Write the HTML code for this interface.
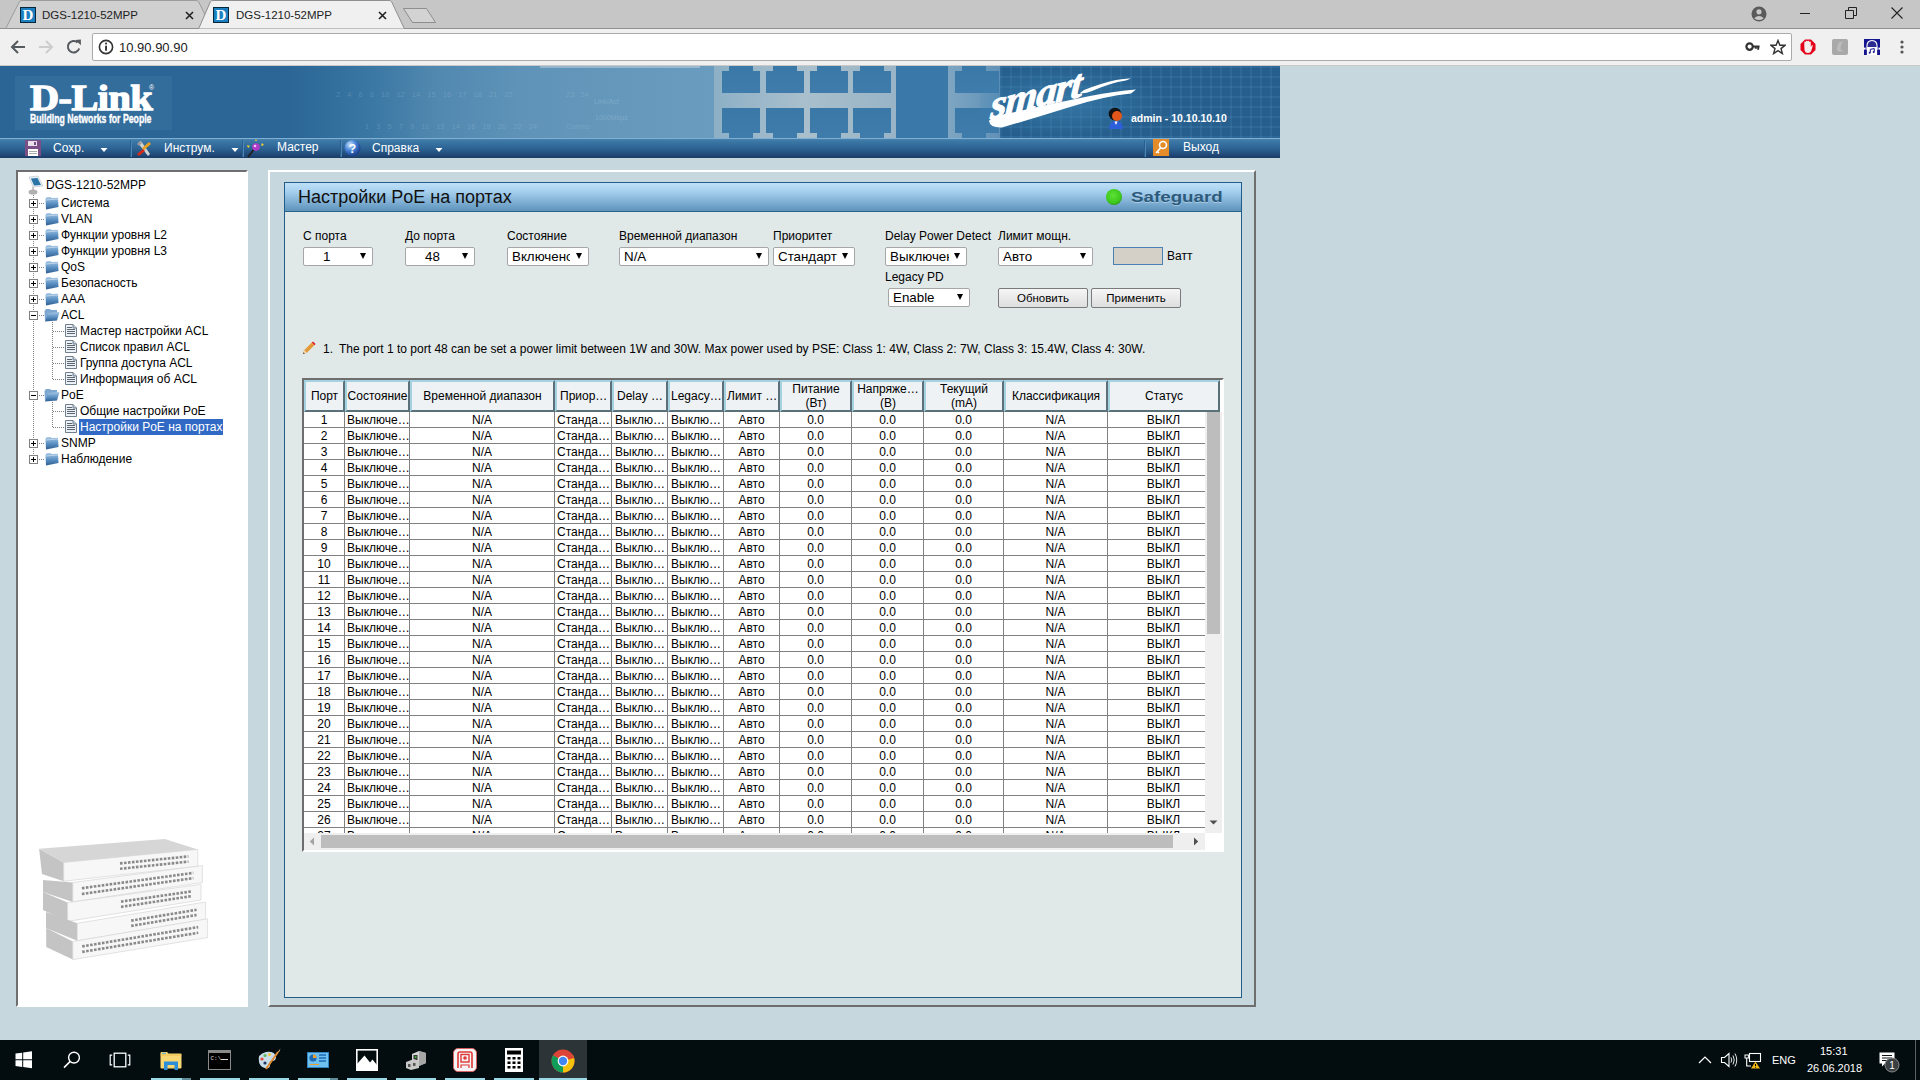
<!DOCTYPE html>
<html><head><meta charset="utf-8">
<style>
*{margin:0;padding:0;box-sizing:border-box}
html,body{width:1920px;height:1080px;overflow:hidden;background:#c6d7de;font-family:"Liberation Sans",sans-serif;font-size:12px;color:#000}
.a{position:absolute}
#tabstrip{left:0;top:0;width:1920px;height:28px;background:#c6c6c6}
#toolbar{left:0;top:29px;width:1920px;height:37px;background:#f0f0f0;border-bottom:1px solid #c9c9c9}
#omni{left:92px;top:33px;width:1700px;height:28px;background:#fff;border:1px solid #ababab;border-radius:2px}
.fav{width:16px;height:16px;background:#1b7fc0;border:1px solid #06263c}
.fav span{position:absolute;left:0;top:-1px;width:14px;text-align:center;font-family:"Liberation Serif",serif;font-weight:bold;font-size:15px;line-height:16px;color:#fff}
.tabt{font-size:11.5px;line-height:14px;color:#222;white-space:nowrap}
#taskbar{left:0;top:1040px;width:1920px;height:40px;background:#030d10}
#hdr{left:0;top:66px;width:1280px;height:72px;overflow:hidden;background:linear-gradient(90deg,#2a6595 0px,#2b6696 290px,#3a77a3 370px,#5289b0 440px,#5f93b8 520px,#6598bb 620px,#6a9cbf 714px)}
#menubar{left:0;top:138px;width:1280px;height:20px;background:linear-gradient(#4f88b2 0%,#3c78a6 15%,#2d6596 50%,#1b3c68 100%)}
#tree{left:16px;top:170px;width:232px;height:837px;background:#fff;border:2px solid;border-color:#6e6e6e #fff #fff #6e6e6e}
#frame{left:268px;top:170px;width:988px;height:837px;border:2px solid;border-color:#fff #6e6e6e #6e6e6e #fff}
#panel{left:284px;top:182px;width:958px;height:816px;background:#e0e8e8;border:1px solid #215d8a}
#title{left:285px;top:183px;width:956px;height:29px;background:linear-gradient(#bfe0f8 0%,#a6d0ee 30%,#78a9cf 75%,#5e93ba 100%);border-bottom:1px solid #2a628e}
.pt{width:38px;background:linear-gradient(#3a78a8,#3f7cab);}
.pt.t{clip-path:polygon(0 5px,7px 5px,7px 0,31px 0,31px 5px,100% 5px,100% 100%,0 100%)}
.pt.b{clip-path:polygon(0 0,100% 0,100% calc(100% - 5px),31px calc(100% - 5px),31px 100%,7px 100%,7px calc(100% - 5px),0 calc(100% - 5px))}
.mt{top:141px;font-size:12px;line-height:14px;color:#fff;white-space:nowrap}
.msep{top:140px;width:1px;height:17px;background:#2a5c8c;box-shadow:1px 0 0 #4a86b8}
.tt{font-size:12px;line-height:14px;white-space:nowrap;color:#000}
.bx{width:9px;height:9px;border:1px solid #808080;background:#fff}
.dv{width:1px;background:repeating-linear-gradient(#808080 0 1px,transparent 1px 2px)}
.dh{height:1px;background:repeating-linear-gradient(90deg,#808080 0 1px,transparent 1px 2px)}
.lb{font-size:12px;line-height:14px;white-space:nowrap;color:#000}
.sel{height:19px;background:#fff;border:1px solid #a6a6a6;border-radius:2px}
.sel span{position:absolute;top:2px;font-size:13.33px;line-height:14px;white-space:nowrap}
.sel i{position:absolute;right:6px;top:5px;width:0;height:0;border-left:3.5px solid transparent;border-right:3.5px solid transparent;border-top:6px solid #000}
.btn{height:20px;border:1px solid #7a7a7a;border-radius:2px;background:linear-gradient(#f6f6f6,#dedede);font-size:11.5px;line-height:19px;text-align:center;color:#000}
.hc{top:380px;height:32px;background:#eef2f4;border:2px solid;border-color:#a4d2e0 #5b717a #5b717a #a4d2e0}
.ht{position:absolute;font-size:12px;line-height:14px;white-space:nowrap;color:#000}
.hl{left:0;width:901px;height:1px;background:#808080}
.vl{top:0;width:1px;height:421px;background:#808080}
.dt{font-size:12px;line-height:15px;white-space:nowrap;color:#000}
.tbi{top:1078px;height:2px;background:#9bd8e6}
</style></head><body>
<!-- ===== Chrome tab strip ===== -->
<div id="tabstrip" class="a"></div>
<svg class="a" style="left:0;top:0" width="450" height="30">
  <!-- inactive tab -->
  <path d="M5.5 29 L19.5 1.5 Q20.5 0.5 22 0.5 L196 0.5 Q197.5 0.5 198.5 1.5 L212 29 Z" fill="#d0d0d0" stroke="#9c9c9c" stroke-width="1"/>
  <!-- active tab -->
  <path d="M198.5 29 L210.5 1.5 Q211.5 0.5 213 0.5 L389 0.5 Q390.5 0.5 391.5 1.5 L404.5 29 Z" fill="#f0f0f0" stroke="#8f8f8f" stroke-width="1"/>
  <!-- new tab button -->
  <path d="M403.5 8.5 L426.5 8.5 L435.5 22.5 L412.5 22.5 Z" fill="#d3d3d3" stroke="#8e8e8e" stroke-width="1" stroke-linejoin="round"/>
</svg>
<div class="a" style="left:0;top:28px;width:199px;height:1px;background:#909090"></div>
<div class="a" style="left:404px;top:28px;width:1516px;height:1px;background:#909090"></div>
<!-- favicons -->
<div class="a fav" style="left:20px;top:7px"><span>D</span></div>
<div class="a fav" style="left:213px;top:7px"><span>D</span></div>
<div class="a tabt" style="left:42px;top:8px">DGS-1210-52MPP</div>
<div class="a tabt" style="left:236px;top:8px">DGS-1210-52MPP</div>
<svg class="a" style="left:185px;top:11px" width="9" height="9"><path d="M1 1L8 8M8 1L1 8" stroke="#222" stroke-width="1.6"/></svg>
<svg class="a" style="left:378px;top:11px" width="9" height="9"><path d="M1 1L8 8M8 1L1 8" stroke="#222" stroke-width="1.6"/></svg>
<!-- window controls -->
<svg class="a" style="left:1750px;top:5px" width="18" height="18"><circle cx="9" cy="9" r="7.5" fill="#5a5a5a"/><circle cx="9" cy="6.8" r="2.6" fill="#c8c8c8"/><path d="M4.2 13.2 Q9 8.8 13.8 13.2 Q9 17 4.2 13.2Z" fill="#c8c8c8"/></svg>
<div class="a" style="left:1800px;top:13px;width:10px;height:1px;background:#222"></div>
<svg class="a" style="left:1845px;top:7px" width="12" height="12"><path d="M0.5 3.5H8.5V11.5H0.5Z M3.5 3.5V0.5H11.5V8.5H8.5" fill="none" stroke="#222" stroke-width="1"/></svg>
<svg class="a" style="left:1891px;top:7px" width="12" height="12"><path d="M0.5 0.5L11.5 11.5M11.5 0.5L0.5 11.5" stroke="#222" stroke-width="1.1"/></svg>
<!-- ===== toolbar ===== -->
<div id="toolbar" class="a"></div>
<svg class="a" style="left:10px;top:39px" width="16" height="16"><path d="M15 8H2.5M8 2L2 8L8 14" fill="none" stroke="#555a5f" stroke-width="2"/></svg>
<svg class="a" style="left:38px;top:39px" width="16" height="16"><path d="M1 8H13.5M8 2L14 8L8 14" fill="none" stroke="#cdcdcd" stroke-width="2"/></svg>
<svg class="a" style="left:66px;top:39px" width="16" height="16"><path d="M13.2 9.5 A5.8 5.8 0 1 1 11.6 3.4" fill="none" stroke="#555a5f" stroke-width="2"/><path d="M9.2 0.9 L14.9 0.5 L14.9 6.2Z" fill="#555a5f"/></svg>
<div id="omni" class="a"></div>
<svg class="a" style="left:98px;top:39px" width="16" height="16"><circle cx="8" cy="8" r="6.6" fill="none" stroke="#333" stroke-width="1.6"/><rect x="7.1" y="6.7" width="1.9" height="5" fill="#333"/><rect x="7.1" y="3.6" width="1.9" height="1.8" fill="#333"/></svg>
<div class="a" style="left:119px;top:40px;font-size:13px;color:#222;line-height:15px">10.90.90.90</div>
<svg class="a" style="left:1745px;top:39px" width="16" height="16"><circle cx="4.6" cy="7.6" r="3.2" fill="none" stroke="#333" stroke-width="2.2"/><path d="M7.6 7.6H14.6M13.2 7.6V10.8M10.8 7.6V9.8" stroke="#333" stroke-width="2"/></svg>
<svg class="a" style="left:1770px;top:39px" width="16" height="16"><path d="M8 1.4L9.9 6.2L15 6.3L11 9.6L12.4 14.6L8 11.7L3.6 14.6L5 9.6L1 6.3L6.1 6.2Z" fill="none" stroke="#333" stroke-width="1.4" stroke-linejoin="miter"/></svg>
<svg class="a" style="left:1800px;top:39px" width="16" height="16"><path d="M5 0.5H11L15.5 5V11L11 15.5H5L0.5 11V5Z" fill="#e4001b"/><path d="M4.3 7 V3.4 Q4.3 2.5 5.1 2.5 Q5.8 2.5 5.8 3.4 V2.8 Q5.8 1.8 6.7 1.8 Q7.5 1.8 7.5 2.8 V2.6 Q7.5 1.8 8.4 1.8 Q9.2 1.8 9.2 2.7 V3.2 Q9.3 2.4 10 2.4 Q10.8 2.5 10.8 3.3 V8.2 L11.6 6.6 Q12.3 5.8 12.9 6.4 L11.2 12 Q10.5 14 8 14 Q5.2 14 4.6 11.5 Z" fill="#f4eeee"/></svg>
<svg class="a" style="left:1832px;top:39px" width="16" height="16"><rect x="0" y="0" width="16" height="16" rx="2" fill="#a9a9a9"/><path d="M7 3.5 Q9 2.4 11.6 2.6 Q9.6 4 9 6 Q8.4 8.5 8.8 11 L11 11.4 Q10 13 7 12.5 Q4.6 12 5.2 9 Q5.7 5.5 7 3.5Z" fill="#bdbdbd"/></svg>
<svg class="a" style="left:1864px;top:39px" width="16" height="16"><rect x="0" y="0" width="16" height="16" fill="#14148e"/><path d="M2.4 16 V7 Q2.4 1 8 1 Q13.6 1 13.6 7 V16Z" fill="#fff"/><path d="M3.4 8 Q3.4 2 8 2 Q12.6 2 12.6 8Z" fill="#2a2a90"/><rect x="0" y="8.6" width="1.6" height="2" fill="#fff"/><rect x="14.4" y="8.6" width="1.6" height="2" fill="#fff"/><rect x="1.6" y="11" width="1.2" height="5" fill="#14148e"/><rect x="13.2" y="11" width="1.2" height="5" fill="#14148e"/><path d="M6.3 13.5 V10.3 L10.3 9.6 V12.7" fill="none" stroke="#14148e" stroke-width="1"/><circle cx="5.7" cy="13.8" r="1" fill="#14148e"/><circle cx="9.7" cy="13" r="1" fill="#14148e"/></svg>
<svg class="a" style="left:1899px;top:39px" width="6" height="16"><circle cx="3" cy="3" r="1.6" fill="#555"/><circle cx="3" cy="8" r="1.6" fill="#555"/><circle cx="3" cy="13" r="1.6" fill="#555"/></svg>
<!-- ===== D-Link header ===== -->
<div id="hdr" class="a">
  <div class="a" style="left:15px;top:10px;width:157px;height:54px;background:#336d9c"></div>
  <div class="a" style="left:30px;top:13px;font-family:'Liberation Serif',serif;font-weight:bold;font-size:36px;line-height:40px;color:#fff;letter-spacing:-0.5px;transform:scale(1.12,0.97);transform-origin:0 0;-webkit-text-stroke:1.3px #fff">D-Link</div>
  <div class="a" style="left:149px;top:18px;font-size:7px;color:#fff;line-height:8px">&#174;</div>
  <div class="a" style="left:30px;top:46px;font-weight:bold;font-size:13px;line-height:14px;color:#fff;transform:scaleX(0.67);transform-origin:0 0;white-space:nowrap;-webkit-text-stroke:0.4px #fff">Building Networks for People</div>
  <!-- faint port labels -->
  <div class="a" style="left:336px;top:24px;font-size:7.5px;color:rgba(205,225,240,0.2);white-space:nowrap;word-spacing:5px">2 4 6 8 10 12 14 15 16 17 18 21 22</div>
  <div class="a" style="left:566px;top:24px;font-size:7.5px;color:rgba(205,225,240,0.2);white-space:nowrap;word-spacing:4px">23 24</div>
  <div class="a" style="left:365px;top:56px;font-size:7.5px;color:rgba(205,225,240,0.2);white-space:nowrap;word-spacing:5px">1 3 5 7 9 11 13 14 16 19 20 22 24</div>
  <div class="a" style="left:566px;top:56px;font-size:7.5px;color:rgba(205,225,240,0.2);white-space:nowrap">Combo</div>
  <div class="a" style="left:594px;top:32px;font-size:7px;color:rgba(205,225,240,0.25)">Link/Act</div>
  <div class="a" style="left:595px;top:48px;font-size:7px;color:rgba(205,225,240,0.25)">1000Mbps</div>
  <div class="a" style="left:540px;top:0;width:160px;height:2px;background:rgba(200,215,225,0.5)"></div>
  <!-- port block 1 -->
  <div class="a" style="left:714px;top:0;width:182px;height:72px;background:linear-gradient(90deg,#8db0c6,#a9bfcc 50%,#98b4c6)"></div>
  <div class="a pt t" style="left:722px;top:0;height:27px"></div>
  <div class="a pt t" style="left:766px;top:0;height:27px"></div>
  <div class="a pt t" style="left:810px;top:0;height:27px"></div>
  <div class="a pt t" style="left:853px;top:0;height:27px"></div>
  <div class="a pt b" style="left:722px;top:42px;height:30px"></div>
  <div class="a pt b" style="left:766px;top:42px;height:30px"></div>
  <div class="a pt b" style="left:810px;top:42px;height:30px"></div>
  <div class="a pt b" style="left:853px;top:42px;height:30px"></div>
  <div class="a" style="left:896px;top:0;width:52px;height:72px;background:#3978a8"></div>
  <!-- port block 2 -->
  <div class="a" style="left:948px;top:0;width:60px;height:72px;background:linear-gradient(90deg,#7ea6c2,#5b8db5)"></div>
  <div class="a pt t" style="left:955px;top:0;height:27px;width:44px"></div>
  <div class="a pt b" style="left:955px;top:42px;height:30px;width:44px"></div>
  <!-- grid region -->
  <div class="a" style="left:1000px;top:0;width:280px;height:72px;background-color:#265f8e;background-image:repeating-linear-gradient(90deg,rgba(100,160,205,0.14) 0 2px,transparent 2px 10px),repeating-linear-gradient(0deg,rgba(100,160,205,0.14) 0 2px,transparent 2px 10px)"></div>
  <div class="a" style="left:980px;top:0;width:180px;height:72px;background:radial-gradient(ellipse at 45% 50%,rgba(60,130,175,0.7),rgba(60,130,175,0) 70%)"></div>
  <!-- smart logo -->
  <svg class="a" style="left:980px;top:0" width="170" height="72">
    <path d="M9 55 Q12 50 30 47 Q70 38 110 30 Q135 25 156 23.5 L151 27.5 Q125 30 90 41 Q55 52 22 61.5 Q10 62 9 55Z" fill="#fff"/>
    <path d="M104 24 Q122 17 136 14 Q146 12 151 12.5 L146 14.5 Q130 17 112 25 Q104 28 100 27Z" fill="#fff"/>
    <g transform="translate(10 53) rotate(-14) skewX(-18) scale(1.25 1.12)"><text x="0" y="0" font-family="Liberation Serif" font-style="italic" font-weight="bold" font-size="34" fill="#fff" stroke="#fff" stroke-width="0.8" letter-spacing="-1">smart</text></g>
  </svg>
  <!-- user icon -->
  <svg class="a" style="left:1107px;top:41px" width="18" height="23">
    <path d="M2 22 Q2 15 8 14 L10 14 Q16 15 16 22Z" fill="#2d5fd8"/>
    <path d="M7.5 14.5 L9 18 L10.5 14.5Z" fill="#fff"/>
    <circle cx="8" cy="7" r="6.3" fill="#111"/>
    <circle cx="10" cy="9" r="5" fill="#e0561b"/>
  </svg>
  <div class="a" style="left:1131px;top:46px;font-weight:bold;font-size:10.5px;line-height:13px;color:#fff;white-space:nowrap">admin - 10.10.10.10</div>
</div>
<!-- ===== menu bar ===== -->
<div id="menubar" class="a"></div>
<div class="a" style="left:0;top:138px;width:1280px;height:1px;background:#7fb0d4"></div>
<!-- save icon -->
<svg class="a" style="left:25px;top:140px" width="16" height="16"><rect x="0" y="0" width="16" height="16" fill="#7a4f86"/><rect x="3" y="1" width="9" height="5" fill="#e8e0ea"/><rect x="9" y="2" width="2" height="3" fill="#7a4f86"/><rect x="3" y="9" width="10" height="7" fill="#fff"/><rect x="4" y="11" width="8" height="1" fill="#aaa"/><rect x="4" y="13" width="8" height="1" fill="#aaa"/></svg>
<div class="a mt" style="left:53px">Сохр.</div>
<svg class="a" style="left:100px;top:148px" width="8" height="5"><path d="M0.5 0H7.5L4 4Z" fill="#fff"/></svg>
<div class="a msep" style="left:130px"></div>
<!-- tools icon -->
<svg class="a" style="left:136px;top:140px" width="16" height="17"><path d="M2 3 L5 1 L14 14 L12 16Z" fill="#d2d2d2"/><path d="M1 4 L4 1 L6 3 L3 6Z" fill="#9a9a9a"/><path d="M13 2 L15 4 L8 10 L6 8Z" fill="#e8a020"/><path d="M7 9 L9 11 L3 16 L1 14Z" fill="#d42a1a"/></svg>
<div class="a mt" style="left:164px">Инструм.</div>
<svg class="a" style="left:231px;top:148px" width="8" height="5"><path d="M0.5 0H7.5L4 4Z" fill="#fff"/></svg>
<div class="a msep" style="left:242px"></div>
<!-- wand icon -->
<svg class="a" style="left:246px;top:139px" width="19" height="19"><path d="M2 18 L9 9" stroke="#222" stroke-width="2"/><circle cx="10" cy="8" r="3.8" fill="#b03ac8"/><circle cx="9" cy="7" r="1.3" fill="#f0c0ff"/><path d="M1 6 L4 7 L2 9Z M16 4 L18 6 L15 7Z M10 0 L11 2 L9 2Z" fill="#f6d62a"/></svg>
<div class="a mt" style="left:277px;top:140px">Мастер</div>
<div class="a msep" style="left:340px"></div>
<!-- help icon -->
<svg class="a" style="left:344px;top:139px" width="17" height="18"><defs><radialGradient id="hg" cx="35%" cy="30%" r="70%"><stop offset="0" stop-color="#cfe6ff"/><stop offset="0.5" stop-color="#4a86d8"/><stop offset="1" stop-color="#1a3f90"/></radialGradient></defs><circle cx="8.5" cy="9" r="8" fill="url(#hg)"/><text x="8.5" y="13.5" text-anchor="middle" font-family="Liberation Sans" font-weight="bold" font-size="12" fill="#fff">?</text></svg>
<div class="a mt" style="left:372px">Справка</div>
<svg class="a" style="left:435px;top:148px" width="8" height="5"><path d="M0.5 0H7.5L4 4Z" fill="#fff"/></svg>
<div class="a msep" style="left:1144px"></div>
<!-- exit icon -->
<svg class="a" style="left:1153px;top:139px" width="16" height="17"><rect x="0" y="0" width="16" height="17" fill="#e48c2a"/><circle cx="10" cy="6" r="3.5" fill="none" stroke="#fff" stroke-width="1.6"/><path d="M8 8.5 L3 14 M4.5 12.5 L6 14" stroke="#fff" stroke-width="1.6"/></svg>
<div class="a mt" style="left:1183px;top:140px">Выход</div>
<!-- ===== tree panel ===== -->
<div id="tree" class="a"></div>
<!-- root icon -->
<svg class="a" style="left:28px;top:175px" width="16" height="20">
  <path d="M1 2 L10 1 L15 11 L5 12Z" fill="#e8eef2" stroke="#b8c4cc" stroke-width="0.6"/>
  <path d="M3 3.5 L9.5 3 L13 10 L6 10.5Z" fill="#2a74a8"/>
  <path d="M5 12 L5 15" stroke="#aaa" stroke-width="1.2"/>
  <ellipse cx="5" cy="17" rx="4.5" ry="2.6" fill="#b0b0b0"/>
</svg>
<div class="a tt" style="left:46px;top:178px">DGS-1210-52MPP</div>
<!-- vertical dotted lines -->
<div class="a dv" style="left:33px;top:195px;height:264px"></div>
<div class="a dv" style="left:52px;top:322px;height:57px"></div>
<div class="a dv" style="left:52px;top:402px;height:25px"></div>
<svg width="0" height="0" style="position:absolute"><defs>
<linearGradient id="fg" x1="0" y1="0" x2="0" y2="1"><stop offset="0" stop-color="#a8c8e4"/><stop offset="0.5" stop-color="#5d93c4"/><stop offset="1" stop-color="#2f5f94"/></linearGradient>
<symbol id="fold" viewBox="0 0 14 14"><path d="M0.5 3 L1.5 1.2 L5.5 1 L6.5 2 L13 1.8 L13.5 11 L1 13.5 Z" fill="url(#fg)"/><path d="M1 4 L13 3" stroke="#c8dcf0" stroke-width="0.8"/></symbol>
<symbol id="folo" viewBox="0 0 16 14"><path d="M1 13 L0.5 3 L2 1 L6 1 L7 2 L13 2 L13 5" fill="#7fa8d0"/><path d="M1 13.5 L4 5 L15.5 4 L13 12.5Z" fill="url(#fg)"/></symbol>
<symbol id="page" viewBox="0 0 12 13"><path d="M0.5 0.5 H8 L11.5 4 V12.5 H0.5Z" fill="#eef2f6" stroke="#6f7f8e" stroke-width="1"/><path d="M8 0.5 V4 H11.5" fill="#c8d0d8" stroke="#6f7f8e" stroke-width="1"/><rect x="2" y="3" width="5" height="1" fill="#5a6470"/><rect x="2" y="5" width="8" height="1" fill="#5a6470"/><rect x="2" y="7" width="8" height="1" fill="#5a6470"/><rect x="2" y="9" width="8" height="1" fill="#5a6470"/></symbol>
</defs></svg>
<div class="a bx" style="left:29px;top:199px"><div class="a" style="left:1px;top:3px;width:5px;height:1px;background:#000"></div><div class="a" style="left:3px;top:1px;width:1px;height:5px;background:#000"></div></div>
<div class="a dh" style="left:39px;top:203px;width:5px"></div>
<svg class="a" style="left:45px;top:196px" width="14" height="14"><use href="#fold"/></svg>
<div class="a tt" style="left:61px;top:196px">Система</div>
<div class="a bx" style="left:29px;top:215px"><div class="a" style="left:1px;top:3px;width:5px;height:1px;background:#000"></div><div class="a" style="left:3px;top:1px;width:1px;height:5px;background:#000"></div></div>
<div class="a dh" style="left:39px;top:219px;width:5px"></div>
<svg class="a" style="left:45px;top:212px" width="14" height="14"><use href="#fold"/></svg>
<div class="a tt" style="left:61px;top:212px">VLAN</div>
<div class="a bx" style="left:29px;top:231px"><div class="a" style="left:1px;top:3px;width:5px;height:1px;background:#000"></div><div class="a" style="left:3px;top:1px;width:1px;height:5px;background:#000"></div></div>
<div class="a dh" style="left:39px;top:235px;width:5px"></div>
<svg class="a" style="left:45px;top:228px" width="14" height="14"><use href="#fold"/></svg>
<div class="a tt" style="left:61px;top:228px">Функции уровня L2</div>
<div class="a bx" style="left:29px;top:247px"><div class="a" style="left:1px;top:3px;width:5px;height:1px;background:#000"></div><div class="a" style="left:3px;top:1px;width:1px;height:5px;background:#000"></div></div>
<div class="a dh" style="left:39px;top:251px;width:5px"></div>
<svg class="a" style="left:45px;top:244px" width="14" height="14"><use href="#fold"/></svg>
<div class="a tt" style="left:61px;top:244px">Функции уровня L3</div>
<div class="a bx" style="left:29px;top:263px"><div class="a" style="left:1px;top:3px;width:5px;height:1px;background:#000"></div><div class="a" style="left:3px;top:1px;width:1px;height:5px;background:#000"></div></div>
<div class="a dh" style="left:39px;top:267px;width:5px"></div>
<svg class="a" style="left:45px;top:260px" width="14" height="14"><use href="#fold"/></svg>
<div class="a tt" style="left:61px;top:260px">QoS</div>
<div class="a bx" style="left:29px;top:279px"><div class="a" style="left:1px;top:3px;width:5px;height:1px;background:#000"></div><div class="a" style="left:3px;top:1px;width:1px;height:5px;background:#000"></div></div>
<div class="a dh" style="left:39px;top:283px;width:5px"></div>
<svg class="a" style="left:45px;top:276px" width="14" height="14"><use href="#fold"/></svg>
<div class="a tt" style="left:61px;top:276px">Безопасность</div>
<div class="a bx" style="left:29px;top:295px"><div class="a" style="left:1px;top:3px;width:5px;height:1px;background:#000"></div><div class="a" style="left:3px;top:1px;width:1px;height:5px;background:#000"></div></div>
<div class="a dh" style="left:39px;top:299px;width:5px"></div>
<svg class="a" style="left:45px;top:292px" width="14" height="14"><use href="#fold"/></svg>
<div class="a tt" style="left:61px;top:292px">AAA</div>
<div class="a bx" style="left:29px;top:311px"><div class="a" style="left:1px;top:3px;width:5px;height:1px;background:#000"></div></div>
<div class="a dh" style="left:39px;top:315px;width:5px"></div>
<svg class="a" style="left:44px;top:308px" width="16" height="14"><use href="#folo"/></svg>
<div class="a tt" style="left:61px;top:308px">ACL</div>
<div class="a dh" style="left:53px;top:331px;width:11px"></div>
<svg class="a" style="left:65px;top:324px" width="12" height="13"><use href="#page"/></svg>
<div class="a tt" style="left:80px;top:324px">Мастер настройки ACL</div>
<div class="a dh" style="left:53px;top:347px;width:11px"></div>
<svg class="a" style="left:65px;top:340px" width="12" height="13"><use href="#page"/></svg>
<div class="a tt" style="left:80px;top:340px">Список правил ACL</div>
<div class="a dh" style="left:53px;top:363px;width:11px"></div>
<svg class="a" style="left:65px;top:356px" width="12" height="13"><use href="#page"/></svg>
<div class="a tt" style="left:80px;top:356px">Группа доступа ACL</div>
<div class="a dh" style="left:53px;top:379px;width:11px"></div>
<svg class="a" style="left:65px;top:372px" width="12" height="13"><use href="#page"/></svg>
<div class="a tt" style="left:80px;top:372px">Информация об ACL</div>
<div class="a bx" style="left:29px;top:391px"><div class="a" style="left:1px;top:3px;width:5px;height:1px;background:#000"></div></div>
<div class="a dh" style="left:39px;top:395px;width:5px"></div>
<svg class="a" style="left:44px;top:388px" width="16" height="14"><use href="#folo"/></svg>
<div class="a tt" style="left:61px;top:388px">PoE</div>
<div class="a dh" style="left:53px;top:411px;width:11px"></div>
<svg class="a" style="left:65px;top:404px" width="12" height="13"><use href="#page"/></svg>
<div class="a tt" style="left:80px;top:404px">Общие настройки PoE</div>
<div class="a dh" style="left:53px;top:427px;width:11px"></div>
<svg class="a" style="left:65px;top:420px" width="12" height="13"><use href="#page"/></svg>
<div class="a" style="left:79px;top:419px;width:144px;height:16px;background:#316ac5"></div>
<div class="a tt" style="left:80px;top:420px;color:#fff">Настройки PoE на портах</div>
<div class="a bx" style="left:29px;top:439px"><div class="a" style="left:1px;top:3px;width:5px;height:1px;background:#000"></div><div class="a" style="left:3px;top:1px;width:1px;height:5px;background:#000"></div></div>
<div class="a dh" style="left:39px;top:443px;width:5px"></div>
<svg class="a" style="left:45px;top:436px" width="14" height="14"><use href="#fold"/></svg>
<div class="a tt" style="left:61px;top:436px">SNMP</div>
<div class="a bx" style="left:29px;top:455px"><div class="a" style="left:1px;top:3px;width:5px;height:1px;background:#000"></div><div class="a" style="left:3px;top:1px;width:1px;height:5px;background:#000"></div></div>
<div class="a dh" style="left:39px;top:459px;width:5px"></div>
<svg class="a" style="left:45px;top:452px" width="14" height="14"><use href="#fold"/></svg>
<div class="a tt" style="left:61px;top:452px">Наблюдение</div>
<!-- switch img -->
<svg class="a" style="left:30px;top:830px" width="190" height="140"><polygon points="9.1,18.8 33.7,32.4 33.7,51.2 12.0,44.0" fill="#c4c4c4"/><polygon points="33.7,32.4 167.8,19.4 167.8,36.3 33.7,51.2" fill="#f7f7f7" stroke="#d0d0d0" stroke-width="0.6"/><polygon points="9.1,18.8 134.8,9.1 167.8,19.4 33.7,32.4" fill="#d6d6d6"/><line x1="90.0" y1="33.4" x2="158.4" y2="26.4" stroke="#8a8a8a" stroke-width="2.6" stroke-dasharray="2.6 1.4"/><line x1="90.0" y1="38.8" x2="158.4" y2="31.6" stroke="#8a8a8a" stroke-width="2.6" stroke-dasharray="2.6 1.4"/><polygon points="13.0,50.0 42.8,52.5 42.8,71.9 13.0,62.0" fill="#c4c4c4"/><polygon points="42.8,52.5 172.4,35.6 172.4,52.5 42.8,71.9" fill="#f7f7f7" stroke="#d0d0d0" stroke-width="0.6"/><line x1="51.9" y1="58.2" x2="163.3" y2="42.9" stroke="#8a8a8a" stroke-width="2.6" stroke-dasharray="2.6 1.4"/><line x1="51.9" y1="64.0" x2="163.3" y2="48.1" stroke="#8a8a8a" stroke-width="2.6" stroke-dasharray="2.6 1.4"/><polygon points="13.0,62.0 37.6,72.6 37.6,91.4 13.0,80.0" fill="#c4c4c4"/><polygon points="37.6,72.6 171.0,54.4 171.0,70.0 37.6,91.4" fill="#f7f7f7" stroke="#d0d0d0" stroke-width="0.6"/><line x1="91.0" y1="71.6" x2="161.7" y2="61.4" stroke="#8a8a8a" stroke-width="2.6" stroke-dasharray="2.6 1.4"/><line x1="91.0" y1="76.9" x2="161.7" y2="66.1" stroke="#8a8a8a" stroke-width="2.6" stroke-dasharray="2.6 1.4"/><polygon points="16.0,82.0 47.3,93.3 47.3,110.8 16.0,98.0" fill="#c4c4c4"/><polygon points="47.3,93.3 175.6,72.0 175.6,89.4 47.3,110.8" fill="#f7f7f7" stroke="#d0d0d0" stroke-width="0.6"/><line x1="101.2" y1="90.6" x2="166.6" y2="79.8" stroke="#8a8a8a" stroke-width="2.6" stroke-dasharray="2.6 1.4"/><line x1="101.2" y1="95.9" x2="166.6" y2="85.0" stroke="#8a8a8a" stroke-width="2.6" stroke-dasharray="2.6 1.4"/><polygon points="16.2,98.0 42.8,111.5 42.8,129.6 16.2,117.0" fill="#c4c4c4"/><polygon points="42.8,111.5 177.6,88.8 177.6,107.6 42.8,129.6" fill="#f7f7f7" stroke="#d0d0d0" stroke-width="0.6"/><line x1="52.2" y1="116.4" x2="168.2" y2="97.1" stroke="#8a8a8a" stroke-width="2.6" stroke-dasharray="2.6 1.4"/><line x1="52.2" y1="121.9" x2="168.2" y2="102.8" stroke="#8a8a8a" stroke-width="2.6" stroke-dasharray="2.6 1.4"/></svg>
<!-- ===== content frame ===== -->
<div id="frame" class="a"></div>
<div id="panel" class="a"></div>
<div id="title" class="a"></div>
<div class="a" style="left:298px;top:187px;font-size:18px;line-height:20px;color:#111;white-space:nowrap">Настройки PoE на портах</div>
<svg class="a" style="left:1105px;top:188px" width="18" height="18"><defs><radialGradient id="gg" cx="45%" cy="40%" r="60%"><stop offset="0" stop-color="#5ee036"/><stop offset="0.8" stop-color="#3cc81c"/><stop offset="1" stop-color="#2f9a1a"/></radialGradient></defs><circle cx="9" cy="9" r="8" fill="url(#gg)"/></svg>
<div class="a" style="left:1131px;top:189px;font-size:14px;line-height:16px;font-weight:bold;color:#2b5a7c;white-space:nowrap;transform:scaleX(1.34);transform-origin:0 0;text-shadow:0 1px 0 rgba(255,255,255,0.35)">Safeguard</div>
<!-- labels -->
<div class="a lb" style="left:303px;top:229px">С порта</div>
<div class="a lb" style="left:405px;top:229px">До порта</div>
<div class="a lb" style="left:507px;top:229px">Состояние</div>
<div class="a lb" style="left:619px;top:229px">Временной диапазон</div>
<div class="a lb" style="left:773px;top:229px">Приоритет</div>
<div class="a lb" style="left:885px;top:229px">Delay Power Detect</div>
<div class="a lb" style="left:998px;top:229px">Лимит мощн.</div>
<div class="a lb" style="left:885px;top:270px">Legacy PD</div>
<!-- selects -->
<div class="a sel" style="left:303px;top:247px;width:70px"><span style="left:19px">1</span><i></i></div>
<div class="a sel" style="left:405px;top:247px;width:70px"><span style="left:19px">48</span><i></i></div>
<div class="a sel" style="left:507px;top:247px;width:82px"><span style="left:4px;width:58px;overflow:hidden">Включено</span><i></i></div>
<div class="a sel" style="left:619px;top:247px;width:150px"><span style="left:4px">N/A</span><i></i></div>
<div class="a sel" style="left:773px;top:247px;width:82px"><span style="left:4px">Стандарт</span><i></i></div>
<div class="a sel" style="left:885px;top:247px;width:82px"><span style="left:4px;width:59px;overflow:hidden">Выключено</span><i></i></div>
<div class="a sel" style="left:998px;top:247px;width:95px"><span style="left:4px">Авто</span><i></i></div>
<div class="a" style="left:1113px;top:247px;width:50px;height:18px;background:#d4d0c8;border:1px solid #4a80b4"></div>
<div class="a lb" style="left:1167px;top:249px">Ватт</div>
<div class="a sel" style="left:888px;top:288px;width:82px"><span style="left:4px">Enable</span><i></i></div>
<div class="a btn" style="left:998px;top:288px;width:90px">Обновить</div>
<div class="a btn" style="left:1091px;top:288px;width:90px">Применить</div>
<!-- note -->
<svg class="a" style="left:302px;top:341px" width="14" height="14"><path d="M1 13 L2.2 9.2 L9.8 1.6 L12.4 4.2 L4.8 11.8Z" fill="#e49a3a"/><path d="M9.8 1.6 L11 0.4 L13.6 3 L12.4 4.2Z" fill="#e0202a"/><path d="M1 13 L2.2 9.2 L4.8 11.8Z" fill="#f4d9b0"/><path d="M1 13 L1.6 11.2 L2.8 12.4Z" fill="#333"/></svg>
<div class="a lb" style="left:323px;top:342px">1.</div>
<div class="a lb" style="left:339px;top:342px">The port 1 to port 48 can be set a power limit between 1W and 30W. Max power used by PSE: Class 1: 4W, Class 2: 7W, Class 3: 15.4W, Class 4: 30W.</div>
<!-- ===== table ===== -->
<div class="a" style="left:302px;top:378px;width:922px;height:474px;background:#fff;border:2px solid;border-color:#6e6e6e #fff #fff #6e6e6e"></div>
<div class="a hc" style="left:304px;width:41px"><div class="ht" style="left:0;width:37px;text-align:center;top:7px">Порт</div></div>
<div class="a hc" style="left:345px;width:65px"><div class="ht" style="left:0;width:61px;text-align:center;top:7px">Состояние</div></div>
<div class="a hc" style="left:410px;width:145px"><div class="ht" style="left:0;width:141px;text-align:center;top:7px">Временной диапазон</div></div>
<div class="a hc" style="left:555px;width:57px"><div class="ht" style="left:3px;top:7px">Приор…</div></div>
<div class="a hc" style="left:612px;width:56px"><div class="ht" style="left:3px;top:7px">Delay …</div></div>
<div class="a hc" style="left:668px;width:56px"><div class="ht" style="left:1px;top:7px">Legacy…</div></div>
<div class="a hc" style="left:724px;width:56px"><div class="ht" style="left:1px;top:7px">Лимит …</div></div>
<div class="a hc" style="left:780px;width:72px"><div class="ht" style="left:0;width:68px;text-align:center;top:0px">Питание<br>(Вт)</div></div>
<div class="a hc" style="left:852px;width:72px"><div class="ht" style="left:0;width:68px;text-align:center;top:0px">Напряже…<br>(В)</div></div>
<div class="a hc" style="left:924px;width:80px"><div class="ht" style="left:0;width:76px;text-align:center;top:0px">Текущий<br>(mA)</div></div>
<div class="a hc" style="left:1004px;width:104px"><div class="ht" style="left:0;width:100px;text-align:center;top:7px">Классификация</div></div>
<div class="a hc" style="left:1108px;width:112px"><div class="ht" style="left:0;width:108px;text-align:center;top:7px">Статус</div></div>
<div class="a" style="left:304px;top:412px;width:901px;height:421px;overflow:hidden">
<div class="a hl" style="top:15px"></div>
<div class="a hl" style="top:31px"></div>
<div class="a hl" style="top:47px"></div>
<div class="a hl" style="top:63px"></div>
<div class="a hl" style="top:79px"></div>
<div class="a hl" style="top:95px"></div>
<div class="a hl" style="top:111px"></div>
<div class="a hl" style="top:127px"></div>
<div class="a hl" style="top:143px"></div>
<div class="a hl" style="top:159px"></div>
<div class="a hl" style="top:175px"></div>
<div class="a hl" style="top:191px"></div>
<div class="a hl" style="top:207px"></div>
<div class="a hl" style="top:223px"></div>
<div class="a hl" style="top:239px"></div>
<div class="a hl" style="top:255px"></div>
<div class="a hl" style="top:271px"></div>
<div class="a hl" style="top:287px"></div>
<div class="a hl" style="top:303px"></div>
<div class="a hl" style="top:319px"></div>
<div class="a hl" style="top:335px"></div>
<div class="a hl" style="top:351px"></div>
<div class="a hl" style="top:367px"></div>
<div class="a hl" style="top:383px"></div>
<div class="a hl" style="top:399px"></div>
<div class="a hl" style="top:415px"></div>
<div class="a hl" style="top:431px"></div>
<div class="a vl" style="left:40px"></div>
<div class="a vl" style="left:105px"></div>
<div class="a vl" style="left:250px"></div>
<div class="a vl" style="left:307px"></div>
<div class="a vl" style="left:363px"></div>
<div class="a vl" style="left:419px"></div>
<div class="a vl" style="left:475px"></div>
<div class="a vl" style="left:547px"></div>
<div class="a vl" style="left:619px"></div>
<div class="a vl" style="left:699px"></div>
<div class="a vl" style="left:803px"></div>
<div class="a dt" style="left:0px;top:1px;width:40px;text-align:center">1</div>
<div class="a dt" style="left:43px;top:1px">Выключе…</div>
<div class="a dt" style="left:106px;top:1px;width:144px;text-align:center">N/A</div>
<div class="a dt" style="left:253px;top:1px">Станда…</div>
<div class="a dt" style="left:311px;top:1px">Выклю…</div>
<div class="a dt" style="left:367px;top:1px">Выклю…</div>
<div class="a dt" style="left:420px;top:1px;width:55px;text-align:center">Авто</div>
<div class="a dt" style="left:476px;top:1px;width:71px;text-align:center">0.0</div>
<div class="a dt" style="left:548px;top:1px;width:71px;text-align:center">0.0</div>
<div class="a dt" style="left:620px;top:1px;width:79px;text-align:center">0.0</div>
<div class="a dt" style="left:700px;top:1px;width:103px;text-align:center">N/A</div>
<div class="a dt" style="left:804px;top:1px;width:111px;text-align:center">ВЫКЛ</div>
<div class="a dt" style="left:0px;top:17px;width:40px;text-align:center">2</div>
<div class="a dt" style="left:43px;top:17px">Выключе…</div>
<div class="a dt" style="left:106px;top:17px;width:144px;text-align:center">N/A</div>
<div class="a dt" style="left:253px;top:17px">Станда…</div>
<div class="a dt" style="left:311px;top:17px">Выклю…</div>
<div class="a dt" style="left:367px;top:17px">Выклю…</div>
<div class="a dt" style="left:420px;top:17px;width:55px;text-align:center">Авто</div>
<div class="a dt" style="left:476px;top:17px;width:71px;text-align:center">0.0</div>
<div class="a dt" style="left:548px;top:17px;width:71px;text-align:center">0.0</div>
<div class="a dt" style="left:620px;top:17px;width:79px;text-align:center">0.0</div>
<div class="a dt" style="left:700px;top:17px;width:103px;text-align:center">N/A</div>
<div class="a dt" style="left:804px;top:17px;width:111px;text-align:center">ВЫКЛ</div>
<div class="a dt" style="left:0px;top:33px;width:40px;text-align:center">3</div>
<div class="a dt" style="left:43px;top:33px">Выключе…</div>
<div class="a dt" style="left:106px;top:33px;width:144px;text-align:center">N/A</div>
<div class="a dt" style="left:253px;top:33px">Станда…</div>
<div class="a dt" style="left:311px;top:33px">Выклю…</div>
<div class="a dt" style="left:367px;top:33px">Выклю…</div>
<div class="a dt" style="left:420px;top:33px;width:55px;text-align:center">Авто</div>
<div class="a dt" style="left:476px;top:33px;width:71px;text-align:center">0.0</div>
<div class="a dt" style="left:548px;top:33px;width:71px;text-align:center">0.0</div>
<div class="a dt" style="left:620px;top:33px;width:79px;text-align:center">0.0</div>
<div class="a dt" style="left:700px;top:33px;width:103px;text-align:center">N/A</div>
<div class="a dt" style="left:804px;top:33px;width:111px;text-align:center">ВЫКЛ</div>
<div class="a dt" style="left:0px;top:49px;width:40px;text-align:center">4</div>
<div class="a dt" style="left:43px;top:49px">Выключе…</div>
<div class="a dt" style="left:106px;top:49px;width:144px;text-align:center">N/A</div>
<div class="a dt" style="left:253px;top:49px">Станда…</div>
<div class="a dt" style="left:311px;top:49px">Выклю…</div>
<div class="a dt" style="left:367px;top:49px">Выклю…</div>
<div class="a dt" style="left:420px;top:49px;width:55px;text-align:center">Авто</div>
<div class="a dt" style="left:476px;top:49px;width:71px;text-align:center">0.0</div>
<div class="a dt" style="left:548px;top:49px;width:71px;text-align:center">0.0</div>
<div class="a dt" style="left:620px;top:49px;width:79px;text-align:center">0.0</div>
<div class="a dt" style="left:700px;top:49px;width:103px;text-align:center">N/A</div>
<div class="a dt" style="left:804px;top:49px;width:111px;text-align:center">ВЫКЛ</div>
<div class="a dt" style="left:0px;top:65px;width:40px;text-align:center">5</div>
<div class="a dt" style="left:43px;top:65px">Выключе…</div>
<div class="a dt" style="left:106px;top:65px;width:144px;text-align:center">N/A</div>
<div class="a dt" style="left:253px;top:65px">Станда…</div>
<div class="a dt" style="left:311px;top:65px">Выклю…</div>
<div class="a dt" style="left:367px;top:65px">Выклю…</div>
<div class="a dt" style="left:420px;top:65px;width:55px;text-align:center">Авто</div>
<div class="a dt" style="left:476px;top:65px;width:71px;text-align:center">0.0</div>
<div class="a dt" style="left:548px;top:65px;width:71px;text-align:center">0.0</div>
<div class="a dt" style="left:620px;top:65px;width:79px;text-align:center">0.0</div>
<div class="a dt" style="left:700px;top:65px;width:103px;text-align:center">N/A</div>
<div class="a dt" style="left:804px;top:65px;width:111px;text-align:center">ВЫКЛ</div>
<div class="a dt" style="left:0px;top:81px;width:40px;text-align:center">6</div>
<div class="a dt" style="left:43px;top:81px">Выключе…</div>
<div class="a dt" style="left:106px;top:81px;width:144px;text-align:center">N/A</div>
<div class="a dt" style="left:253px;top:81px">Станда…</div>
<div class="a dt" style="left:311px;top:81px">Выклю…</div>
<div class="a dt" style="left:367px;top:81px">Выклю…</div>
<div class="a dt" style="left:420px;top:81px;width:55px;text-align:center">Авто</div>
<div class="a dt" style="left:476px;top:81px;width:71px;text-align:center">0.0</div>
<div class="a dt" style="left:548px;top:81px;width:71px;text-align:center">0.0</div>
<div class="a dt" style="left:620px;top:81px;width:79px;text-align:center">0.0</div>
<div class="a dt" style="left:700px;top:81px;width:103px;text-align:center">N/A</div>
<div class="a dt" style="left:804px;top:81px;width:111px;text-align:center">ВЫКЛ</div>
<div class="a dt" style="left:0px;top:97px;width:40px;text-align:center">7</div>
<div class="a dt" style="left:43px;top:97px">Выключе…</div>
<div class="a dt" style="left:106px;top:97px;width:144px;text-align:center">N/A</div>
<div class="a dt" style="left:253px;top:97px">Станда…</div>
<div class="a dt" style="left:311px;top:97px">Выклю…</div>
<div class="a dt" style="left:367px;top:97px">Выклю…</div>
<div class="a dt" style="left:420px;top:97px;width:55px;text-align:center">Авто</div>
<div class="a dt" style="left:476px;top:97px;width:71px;text-align:center">0.0</div>
<div class="a dt" style="left:548px;top:97px;width:71px;text-align:center">0.0</div>
<div class="a dt" style="left:620px;top:97px;width:79px;text-align:center">0.0</div>
<div class="a dt" style="left:700px;top:97px;width:103px;text-align:center">N/A</div>
<div class="a dt" style="left:804px;top:97px;width:111px;text-align:center">ВЫКЛ</div>
<div class="a dt" style="left:0px;top:113px;width:40px;text-align:center">8</div>
<div class="a dt" style="left:43px;top:113px">Выключе…</div>
<div class="a dt" style="left:106px;top:113px;width:144px;text-align:center">N/A</div>
<div class="a dt" style="left:253px;top:113px">Станда…</div>
<div class="a dt" style="left:311px;top:113px">Выклю…</div>
<div class="a dt" style="left:367px;top:113px">Выклю…</div>
<div class="a dt" style="left:420px;top:113px;width:55px;text-align:center">Авто</div>
<div class="a dt" style="left:476px;top:113px;width:71px;text-align:center">0.0</div>
<div class="a dt" style="left:548px;top:113px;width:71px;text-align:center">0.0</div>
<div class="a dt" style="left:620px;top:113px;width:79px;text-align:center">0.0</div>
<div class="a dt" style="left:700px;top:113px;width:103px;text-align:center">N/A</div>
<div class="a dt" style="left:804px;top:113px;width:111px;text-align:center">ВЫКЛ</div>
<div class="a dt" style="left:0px;top:129px;width:40px;text-align:center">9</div>
<div class="a dt" style="left:43px;top:129px">Выключе…</div>
<div class="a dt" style="left:106px;top:129px;width:144px;text-align:center">N/A</div>
<div class="a dt" style="left:253px;top:129px">Станда…</div>
<div class="a dt" style="left:311px;top:129px">Выклю…</div>
<div class="a dt" style="left:367px;top:129px">Выклю…</div>
<div class="a dt" style="left:420px;top:129px;width:55px;text-align:center">Авто</div>
<div class="a dt" style="left:476px;top:129px;width:71px;text-align:center">0.0</div>
<div class="a dt" style="left:548px;top:129px;width:71px;text-align:center">0.0</div>
<div class="a dt" style="left:620px;top:129px;width:79px;text-align:center">0.0</div>
<div class="a dt" style="left:700px;top:129px;width:103px;text-align:center">N/A</div>
<div class="a dt" style="left:804px;top:129px;width:111px;text-align:center">ВЫКЛ</div>
<div class="a dt" style="left:0px;top:145px;width:40px;text-align:center">10</div>
<div class="a dt" style="left:43px;top:145px">Выключе…</div>
<div class="a dt" style="left:106px;top:145px;width:144px;text-align:center">N/A</div>
<div class="a dt" style="left:253px;top:145px">Станда…</div>
<div class="a dt" style="left:311px;top:145px">Выклю…</div>
<div class="a dt" style="left:367px;top:145px">Выклю…</div>
<div class="a dt" style="left:420px;top:145px;width:55px;text-align:center">Авто</div>
<div class="a dt" style="left:476px;top:145px;width:71px;text-align:center">0.0</div>
<div class="a dt" style="left:548px;top:145px;width:71px;text-align:center">0.0</div>
<div class="a dt" style="left:620px;top:145px;width:79px;text-align:center">0.0</div>
<div class="a dt" style="left:700px;top:145px;width:103px;text-align:center">N/A</div>
<div class="a dt" style="left:804px;top:145px;width:111px;text-align:center">ВЫКЛ</div>
<div class="a dt" style="left:0px;top:161px;width:40px;text-align:center">11</div>
<div class="a dt" style="left:43px;top:161px">Выключе…</div>
<div class="a dt" style="left:106px;top:161px;width:144px;text-align:center">N/A</div>
<div class="a dt" style="left:253px;top:161px">Станда…</div>
<div class="a dt" style="left:311px;top:161px">Выклю…</div>
<div class="a dt" style="left:367px;top:161px">Выклю…</div>
<div class="a dt" style="left:420px;top:161px;width:55px;text-align:center">Авто</div>
<div class="a dt" style="left:476px;top:161px;width:71px;text-align:center">0.0</div>
<div class="a dt" style="left:548px;top:161px;width:71px;text-align:center">0.0</div>
<div class="a dt" style="left:620px;top:161px;width:79px;text-align:center">0.0</div>
<div class="a dt" style="left:700px;top:161px;width:103px;text-align:center">N/A</div>
<div class="a dt" style="left:804px;top:161px;width:111px;text-align:center">ВЫКЛ</div>
<div class="a dt" style="left:0px;top:177px;width:40px;text-align:center">12</div>
<div class="a dt" style="left:43px;top:177px">Выключе…</div>
<div class="a dt" style="left:106px;top:177px;width:144px;text-align:center">N/A</div>
<div class="a dt" style="left:253px;top:177px">Станда…</div>
<div class="a dt" style="left:311px;top:177px">Выклю…</div>
<div class="a dt" style="left:367px;top:177px">Выклю…</div>
<div class="a dt" style="left:420px;top:177px;width:55px;text-align:center">Авто</div>
<div class="a dt" style="left:476px;top:177px;width:71px;text-align:center">0.0</div>
<div class="a dt" style="left:548px;top:177px;width:71px;text-align:center">0.0</div>
<div class="a dt" style="left:620px;top:177px;width:79px;text-align:center">0.0</div>
<div class="a dt" style="left:700px;top:177px;width:103px;text-align:center">N/A</div>
<div class="a dt" style="left:804px;top:177px;width:111px;text-align:center">ВЫКЛ</div>
<div class="a dt" style="left:0px;top:193px;width:40px;text-align:center">13</div>
<div class="a dt" style="left:43px;top:193px">Выключе…</div>
<div class="a dt" style="left:106px;top:193px;width:144px;text-align:center">N/A</div>
<div class="a dt" style="left:253px;top:193px">Станда…</div>
<div class="a dt" style="left:311px;top:193px">Выклю…</div>
<div class="a dt" style="left:367px;top:193px">Выклю…</div>
<div class="a dt" style="left:420px;top:193px;width:55px;text-align:center">Авто</div>
<div class="a dt" style="left:476px;top:193px;width:71px;text-align:center">0.0</div>
<div class="a dt" style="left:548px;top:193px;width:71px;text-align:center">0.0</div>
<div class="a dt" style="left:620px;top:193px;width:79px;text-align:center">0.0</div>
<div class="a dt" style="left:700px;top:193px;width:103px;text-align:center">N/A</div>
<div class="a dt" style="left:804px;top:193px;width:111px;text-align:center">ВЫКЛ</div>
<div class="a dt" style="left:0px;top:209px;width:40px;text-align:center">14</div>
<div class="a dt" style="left:43px;top:209px">Выключе…</div>
<div class="a dt" style="left:106px;top:209px;width:144px;text-align:center">N/A</div>
<div class="a dt" style="left:253px;top:209px">Станда…</div>
<div class="a dt" style="left:311px;top:209px">Выклю…</div>
<div class="a dt" style="left:367px;top:209px">Выклю…</div>
<div class="a dt" style="left:420px;top:209px;width:55px;text-align:center">Авто</div>
<div class="a dt" style="left:476px;top:209px;width:71px;text-align:center">0.0</div>
<div class="a dt" style="left:548px;top:209px;width:71px;text-align:center">0.0</div>
<div class="a dt" style="left:620px;top:209px;width:79px;text-align:center">0.0</div>
<div class="a dt" style="left:700px;top:209px;width:103px;text-align:center">N/A</div>
<div class="a dt" style="left:804px;top:209px;width:111px;text-align:center">ВЫКЛ</div>
<div class="a dt" style="left:0px;top:225px;width:40px;text-align:center">15</div>
<div class="a dt" style="left:43px;top:225px">Выключе…</div>
<div class="a dt" style="left:106px;top:225px;width:144px;text-align:center">N/A</div>
<div class="a dt" style="left:253px;top:225px">Станда…</div>
<div class="a dt" style="left:311px;top:225px">Выклю…</div>
<div class="a dt" style="left:367px;top:225px">Выклю…</div>
<div class="a dt" style="left:420px;top:225px;width:55px;text-align:center">Авто</div>
<div class="a dt" style="left:476px;top:225px;width:71px;text-align:center">0.0</div>
<div class="a dt" style="left:548px;top:225px;width:71px;text-align:center">0.0</div>
<div class="a dt" style="left:620px;top:225px;width:79px;text-align:center">0.0</div>
<div class="a dt" style="left:700px;top:225px;width:103px;text-align:center">N/A</div>
<div class="a dt" style="left:804px;top:225px;width:111px;text-align:center">ВЫКЛ</div>
<div class="a dt" style="left:0px;top:241px;width:40px;text-align:center">16</div>
<div class="a dt" style="left:43px;top:241px">Выключе…</div>
<div class="a dt" style="left:106px;top:241px;width:144px;text-align:center">N/A</div>
<div class="a dt" style="left:253px;top:241px">Станда…</div>
<div class="a dt" style="left:311px;top:241px">Выклю…</div>
<div class="a dt" style="left:367px;top:241px">Выклю…</div>
<div class="a dt" style="left:420px;top:241px;width:55px;text-align:center">Авто</div>
<div class="a dt" style="left:476px;top:241px;width:71px;text-align:center">0.0</div>
<div class="a dt" style="left:548px;top:241px;width:71px;text-align:center">0.0</div>
<div class="a dt" style="left:620px;top:241px;width:79px;text-align:center">0.0</div>
<div class="a dt" style="left:700px;top:241px;width:103px;text-align:center">N/A</div>
<div class="a dt" style="left:804px;top:241px;width:111px;text-align:center">ВЫКЛ</div>
<div class="a dt" style="left:0px;top:257px;width:40px;text-align:center">17</div>
<div class="a dt" style="left:43px;top:257px">Выключе…</div>
<div class="a dt" style="left:106px;top:257px;width:144px;text-align:center">N/A</div>
<div class="a dt" style="left:253px;top:257px">Станда…</div>
<div class="a dt" style="left:311px;top:257px">Выклю…</div>
<div class="a dt" style="left:367px;top:257px">Выклю…</div>
<div class="a dt" style="left:420px;top:257px;width:55px;text-align:center">Авто</div>
<div class="a dt" style="left:476px;top:257px;width:71px;text-align:center">0.0</div>
<div class="a dt" style="left:548px;top:257px;width:71px;text-align:center">0.0</div>
<div class="a dt" style="left:620px;top:257px;width:79px;text-align:center">0.0</div>
<div class="a dt" style="left:700px;top:257px;width:103px;text-align:center">N/A</div>
<div class="a dt" style="left:804px;top:257px;width:111px;text-align:center">ВЫКЛ</div>
<div class="a dt" style="left:0px;top:273px;width:40px;text-align:center">18</div>
<div class="a dt" style="left:43px;top:273px">Выключе…</div>
<div class="a dt" style="left:106px;top:273px;width:144px;text-align:center">N/A</div>
<div class="a dt" style="left:253px;top:273px">Станда…</div>
<div class="a dt" style="left:311px;top:273px">Выклю…</div>
<div class="a dt" style="left:367px;top:273px">Выклю…</div>
<div class="a dt" style="left:420px;top:273px;width:55px;text-align:center">Авто</div>
<div class="a dt" style="left:476px;top:273px;width:71px;text-align:center">0.0</div>
<div class="a dt" style="left:548px;top:273px;width:71px;text-align:center">0.0</div>
<div class="a dt" style="left:620px;top:273px;width:79px;text-align:center">0.0</div>
<div class="a dt" style="left:700px;top:273px;width:103px;text-align:center">N/A</div>
<div class="a dt" style="left:804px;top:273px;width:111px;text-align:center">ВЫКЛ</div>
<div class="a dt" style="left:0px;top:289px;width:40px;text-align:center">19</div>
<div class="a dt" style="left:43px;top:289px">Выключе…</div>
<div class="a dt" style="left:106px;top:289px;width:144px;text-align:center">N/A</div>
<div class="a dt" style="left:253px;top:289px">Станда…</div>
<div class="a dt" style="left:311px;top:289px">Выклю…</div>
<div class="a dt" style="left:367px;top:289px">Выклю…</div>
<div class="a dt" style="left:420px;top:289px;width:55px;text-align:center">Авто</div>
<div class="a dt" style="left:476px;top:289px;width:71px;text-align:center">0.0</div>
<div class="a dt" style="left:548px;top:289px;width:71px;text-align:center">0.0</div>
<div class="a dt" style="left:620px;top:289px;width:79px;text-align:center">0.0</div>
<div class="a dt" style="left:700px;top:289px;width:103px;text-align:center">N/A</div>
<div class="a dt" style="left:804px;top:289px;width:111px;text-align:center">ВЫКЛ</div>
<div class="a dt" style="left:0px;top:305px;width:40px;text-align:center">20</div>
<div class="a dt" style="left:43px;top:305px">Выключе…</div>
<div class="a dt" style="left:106px;top:305px;width:144px;text-align:center">N/A</div>
<div class="a dt" style="left:253px;top:305px">Станда…</div>
<div class="a dt" style="left:311px;top:305px">Выклю…</div>
<div class="a dt" style="left:367px;top:305px">Выклю…</div>
<div class="a dt" style="left:420px;top:305px;width:55px;text-align:center">Авто</div>
<div class="a dt" style="left:476px;top:305px;width:71px;text-align:center">0.0</div>
<div class="a dt" style="left:548px;top:305px;width:71px;text-align:center">0.0</div>
<div class="a dt" style="left:620px;top:305px;width:79px;text-align:center">0.0</div>
<div class="a dt" style="left:700px;top:305px;width:103px;text-align:center">N/A</div>
<div class="a dt" style="left:804px;top:305px;width:111px;text-align:center">ВЫКЛ</div>
<div class="a dt" style="left:0px;top:321px;width:40px;text-align:center">21</div>
<div class="a dt" style="left:43px;top:321px">Выключе…</div>
<div class="a dt" style="left:106px;top:321px;width:144px;text-align:center">N/A</div>
<div class="a dt" style="left:253px;top:321px">Станда…</div>
<div class="a dt" style="left:311px;top:321px">Выклю…</div>
<div class="a dt" style="left:367px;top:321px">Выклю…</div>
<div class="a dt" style="left:420px;top:321px;width:55px;text-align:center">Авто</div>
<div class="a dt" style="left:476px;top:321px;width:71px;text-align:center">0.0</div>
<div class="a dt" style="left:548px;top:321px;width:71px;text-align:center">0.0</div>
<div class="a dt" style="left:620px;top:321px;width:79px;text-align:center">0.0</div>
<div class="a dt" style="left:700px;top:321px;width:103px;text-align:center">N/A</div>
<div class="a dt" style="left:804px;top:321px;width:111px;text-align:center">ВЫКЛ</div>
<div class="a dt" style="left:0px;top:337px;width:40px;text-align:center">22</div>
<div class="a dt" style="left:43px;top:337px">Выключе…</div>
<div class="a dt" style="left:106px;top:337px;width:144px;text-align:center">N/A</div>
<div class="a dt" style="left:253px;top:337px">Станда…</div>
<div class="a dt" style="left:311px;top:337px">Выклю…</div>
<div class="a dt" style="left:367px;top:337px">Выклю…</div>
<div class="a dt" style="left:420px;top:337px;width:55px;text-align:center">Авто</div>
<div class="a dt" style="left:476px;top:337px;width:71px;text-align:center">0.0</div>
<div class="a dt" style="left:548px;top:337px;width:71px;text-align:center">0.0</div>
<div class="a dt" style="left:620px;top:337px;width:79px;text-align:center">0.0</div>
<div class="a dt" style="left:700px;top:337px;width:103px;text-align:center">N/A</div>
<div class="a dt" style="left:804px;top:337px;width:111px;text-align:center">ВЫКЛ</div>
<div class="a dt" style="left:0px;top:353px;width:40px;text-align:center">23</div>
<div class="a dt" style="left:43px;top:353px">Выключе…</div>
<div class="a dt" style="left:106px;top:353px;width:144px;text-align:center">N/A</div>
<div class="a dt" style="left:253px;top:353px">Станда…</div>
<div class="a dt" style="left:311px;top:353px">Выклю…</div>
<div class="a dt" style="left:367px;top:353px">Выклю…</div>
<div class="a dt" style="left:420px;top:353px;width:55px;text-align:center">Авто</div>
<div class="a dt" style="left:476px;top:353px;width:71px;text-align:center">0.0</div>
<div class="a dt" style="left:548px;top:353px;width:71px;text-align:center">0.0</div>
<div class="a dt" style="left:620px;top:353px;width:79px;text-align:center">0.0</div>
<div class="a dt" style="left:700px;top:353px;width:103px;text-align:center">N/A</div>
<div class="a dt" style="left:804px;top:353px;width:111px;text-align:center">ВЫКЛ</div>
<div class="a dt" style="left:0px;top:369px;width:40px;text-align:center">24</div>
<div class="a dt" style="left:43px;top:369px">Выключе…</div>
<div class="a dt" style="left:106px;top:369px;width:144px;text-align:center">N/A</div>
<div class="a dt" style="left:253px;top:369px">Станда…</div>
<div class="a dt" style="left:311px;top:369px">Выклю…</div>
<div class="a dt" style="left:367px;top:369px">Выклю…</div>
<div class="a dt" style="left:420px;top:369px;width:55px;text-align:center">Авто</div>
<div class="a dt" style="left:476px;top:369px;width:71px;text-align:center">0.0</div>
<div class="a dt" style="left:548px;top:369px;width:71px;text-align:center">0.0</div>
<div class="a dt" style="left:620px;top:369px;width:79px;text-align:center">0.0</div>
<div class="a dt" style="left:700px;top:369px;width:103px;text-align:center">N/A</div>
<div class="a dt" style="left:804px;top:369px;width:111px;text-align:center">ВЫКЛ</div>
<div class="a dt" style="left:0px;top:385px;width:40px;text-align:center">25</div>
<div class="a dt" style="left:43px;top:385px">Выключе…</div>
<div class="a dt" style="left:106px;top:385px;width:144px;text-align:center">N/A</div>
<div class="a dt" style="left:253px;top:385px">Станда…</div>
<div class="a dt" style="left:311px;top:385px">Выклю…</div>
<div class="a dt" style="left:367px;top:385px">Выклю…</div>
<div class="a dt" style="left:420px;top:385px;width:55px;text-align:center">Авто</div>
<div class="a dt" style="left:476px;top:385px;width:71px;text-align:center">0.0</div>
<div class="a dt" style="left:548px;top:385px;width:71px;text-align:center">0.0</div>
<div class="a dt" style="left:620px;top:385px;width:79px;text-align:center">0.0</div>
<div class="a dt" style="left:700px;top:385px;width:103px;text-align:center">N/A</div>
<div class="a dt" style="left:804px;top:385px;width:111px;text-align:center">ВЫКЛ</div>
<div class="a dt" style="left:0px;top:401px;width:40px;text-align:center">26</div>
<div class="a dt" style="left:43px;top:401px">Выключе…</div>
<div class="a dt" style="left:106px;top:401px;width:144px;text-align:center">N/A</div>
<div class="a dt" style="left:253px;top:401px">Станда…</div>
<div class="a dt" style="left:311px;top:401px">Выклю…</div>
<div class="a dt" style="left:367px;top:401px">Выклю…</div>
<div class="a dt" style="left:420px;top:401px;width:55px;text-align:center">Авто</div>
<div class="a dt" style="left:476px;top:401px;width:71px;text-align:center">0.0</div>
<div class="a dt" style="left:548px;top:401px;width:71px;text-align:center">0.0</div>
<div class="a dt" style="left:620px;top:401px;width:79px;text-align:center">0.0</div>
<div class="a dt" style="left:700px;top:401px;width:103px;text-align:center">N/A</div>
<div class="a dt" style="left:804px;top:401px;width:111px;text-align:center">ВЫКЛ</div>
<div class="a dt" style="left:0px;top:417px;width:40px;text-align:center">27</div>
<div class="a dt" style="left:43px;top:417px">Выключе…</div>
<div class="a dt" style="left:106px;top:417px;width:144px;text-align:center">N/A</div>
<div class="a dt" style="left:253px;top:417px">Станда…</div>
<div class="a dt" style="left:311px;top:417px">Выклю…</div>
<div class="a dt" style="left:367px;top:417px">Выклю…</div>
<div class="a dt" style="left:420px;top:417px;width:55px;text-align:center">Авто</div>
<div class="a dt" style="left:476px;top:417px;width:71px;text-align:center">0.0</div>
<div class="a dt" style="left:548px;top:417px;width:71px;text-align:center">0.0</div>
<div class="a dt" style="left:620px;top:417px;width:79px;text-align:center">0.0</div>
<div class="a dt" style="left:700px;top:417px;width:103px;text-align:center">N/A</div>
<div class="a dt" style="left:804px;top:417px;width:111px;text-align:center">ВЫКЛ</div>
</div>
<div class="a" style="left:1205px;top:412px;width:17px;height:421px;background:#efefef"></div>
<div class="a" style="left:1207px;top:412px;width:13px;height:222px;background:#bdbdbd"></div>
<svg class="a" style="left:1209px;top:820px" width="9" height="6"><path d="M0.5 0.5H8.5L4.5 4.5Z" fill="#505050"/></svg>
<div class="a" style="left:304px;top:833px;width:901px;height:17px;background:#efefef"></div>
<div class="a" style="left:321px;top:835px;width:852px;height:13px;background:#bdbdbd"></div>
<svg class="a" style="left:309px;top:837px" width="6" height="9"><path d="M5 0.5V8.5L0.8 4.5Z" fill="#a3a3a3"/></svg>
<svg class="a" style="left:1193px;top:837px" width="6" height="9"><path d="M1 0.5V8.5L5.2 4.5Z" fill="#505050"/></svg>
<div class="a" style="left:1205px;top:833px;width:17px;height:17px;background:#fff"></div>
<!-- ===== taskbar ===== -->
<div id="taskbar" class="a"></div>
<div class="a" style="left:539px;top:1040px;width:48px;height:40px;background:#2d3437"></div>
<!-- start -->
<svg class="a" style="left:15px;top:1051px" width="18" height="18"><path d="M0.5 2.6 L7.2 1.7 V8.3 H0.5Z M8.2 1.5 L17 0.3 V8.3 H8.2Z M0.5 9.3 H7.2 V15.9 L0.5 15Z M8.2 9.3 H17 V17.3 L8.2 16.1Z" fill="#fff"/></svg>
<!-- search -->
<svg class="a" style="left:63px;top:1051px" width="18" height="18"><circle cx="11" cy="6.6" r="5.4" fill="none" stroke="#fff" stroke-width="1.4"/><path d="M7.2 10.4 L1 16.6" stroke="#fff" stroke-width="1.5"/></svg>
<!-- task view -->
<svg class="a" style="left:109px;top:1052px" width="22" height="16"><rect x="5.2" y="1.2" width="11.6" height="13.6" fill="none" stroke="#fff" stroke-width="1.3"/><path d="M3.2 3.2 H1.2 V12.8 H3.2 M18.8 3.2 H20.8 V12.8 H18.8" fill="none" stroke="#fff" stroke-width="1.2"/></svg>
<!-- explorer -->
<svg class="a" style="left:160px;top:1051px" width="22" height="19"><path d="M0.5 2 Q0.5 1 1.5 1 H7 L8.5 2.5 H20.5 Q21.5 2.5 21.5 3.5 V16.5 Q21.5 17.5 20.5 17.5 H1.5 Q0.5 17.5 0.5 16.5Z" fill="#f8d775"/><path d="M0.5 4 H21.5" stroke="#e9bd4c" stroke-width="1"/><rect x="2" y="1.8" width="4" height="1" fill="#4aa3df"/><path d="M4 19 V10.5 H18 V19 H14.5 V14 H7.5 V19Z" fill="#2a8fd8"/></svg>
<!-- cmd -->
<svg class="a" style="left:208px;top:1050px" width="23" height="20"><rect x="0.5" y="0.5" width="22" height="19" fill="#000" stroke="#8a8a8a" stroke-width="1"/><rect x="1" y="1" width="21" height="2" fill="#8a8a8a"/><text x="2.5" y="10" font-family="Liberation Mono" font-size="6" fill="#ddd">C:\</text><path d="M13 9.5 H20" stroke="#ddd" stroke-width="1"/></svg>
<!-- paint -->
<svg class="a" style="left:257px;top:1048px" width="25" height="24"><path d="M2 14 Q0 6 9 4 Q18 3 19 9 Q19 13 15 13 Q12 13 13 17 Q13 21 8 20 Q3 19 2 14Z" fill="#c8dcea"/><circle cx="5" cy="11" r="1.6" fill="#e5493a"/><circle cx="8" cy="7.5" r="1.6" fill="#5cb85c"/><circle cx="12.5" cy="6.5" r="1.6" fill="#f0c33c"/><circle cx="8" cy="15" r="1.6" fill="#1f3a60"/><path d="M9 21 L21 4" stroke="#e08a30" stroke-width="2"/><path d="M20 5 L23.5 0.5 L22.5 3.5Z" fill="#f2c27a"/></svg>
<!-- dashboard -->
<svg class="a" style="left:307px;top:1052px" width="22" height="16"><rect x="0.5" y="0.5" width="21" height="15" fill="#6ec0f0" stroke="#2f84c4" stroke-width="1"/><circle cx="6" cy="6" r="3.6" fill="#1e68b4"/><path d="M6 6 V2.4 A3.6 3.6 0 0 1 9.6 6Z" fill="#f0a030"/><path d="M12 3 H19 M12 6 H19 M12 9 H19" stroke="#1e68b4" stroke-width="1.3"/><path d="M2.5 12.5 H12" stroke="#f0a030" stroke-width="1"/></svg>
<!-- photos -->
<svg class="a" style="left:356px;top:1049px" width="22" height="22"><rect x="0.8" y="0.8" width="20.4" height="20.4" fill="none" stroke="#fff" stroke-width="1.6"/><path d="M1 21 V15 L8.5 6.5 L14 13.5 L16.5 10.5 L21 16 V21Z" fill="#fff"/></svg>
<!-- network tool -->
<svg class="a" style="left:405px;top:1050px" width="22" height="20"><path d="M7 4 L14 1 L21 3 V13 L14 16 L7 14Z" fill="#d4d4d4"/><path d="M14 1 L21 3 V13 L14 16Z" fill="#a6a6a6"/><rect x="8.5" y="5" width="4" height="5" fill="#333"/><rect x="9.8" y="6.2" width="1.6" height="1.6" fill="#3ad03a"/><path d="M1 12 L9 9 L14 11 V18 L6 20 L1 18Z" fill="#c8c8c8"/><rect x="3" y="14" width="2.5" height="3" fill="#555"/><rect x="8" y="13" width="2.5" height="3" fill="#555"/></svg>
<!-- red app -->
<svg class="a" style="left:453px;top:1048px" width="24" height="24"><rect x="0.5" y="0.5" width="23" height="23" rx="4.5" fill="#f4f4f4" stroke="#d96060" stroke-width="1"/><path d="M5 20 V6 Q5 4 7 4 H17 Q19 4 19 6 V20" fill="none" stroke="#e03838" stroke-width="1.6"/><rect x="8" y="6.5" width="8" height="7.5" fill="none" stroke="#e03838" stroke-width="1.4"/><circle cx="12" cy="10" r="1.8" fill="#e03838"/><path d="M8 20 V17 H16 V20" fill="none" stroke="#e03838" stroke-width="1.2"/></svg>
<!-- calculator -->
<svg class="a" style="left:505px;top:1048px" width="18" height="24"><rect x="0" y="0" width="18" height="24" fill="#fff"/><rect x="2" y="2.5" width="14" height="4" fill="#000"/><g fill="#000"><rect x="2.5" y="9" width="3" height="2.5"/><rect x="7.5" y="9" width="3" height="2.5"/><rect x="12.5" y="9" width="3" height="2.5"/><rect x="2.5" y="13.5" width="3" height="2.5"/><rect x="7.5" y="13.5" width="3" height="2.5"/><rect x="12.5" y="13.5" width="3" height="2.5"/><rect x="2.5" y="18" width="3" height="2.5"/><rect x="7.5" y="18" width="3" height="2.5"/><rect x="12.5" y="18" width="3" height="2.5"/></g></svg>
<!-- chrome -->
<svg class="a" style="left:551px;top:1049px" width="24" height="24"><circle cx="12" cy="12" r="11.5" fill="#db4437"/><path d="M12 12 L22.0 6.3 A11.5 11.5 0 0 1 12 23.5 Z" fill="#f4c20d"/><path d="M12 12 L12 23.5 A11.5 11.5 0 0 1 2.0 6.3 Z" fill="#0f9d58"/><path d="M12 6.5 H22 A11.5 11.5 0 0 1 23 9 L12 12Z" fill="#db4437"/><circle cx="12" cy="12" r="5.4" fill="#fff"/><circle cx="12" cy="12" r="4.2" fill="#4285f4"/></svg>
<!-- running indicators -->
<div class="a tbi" style="left:151px;width:40px"></div>
<div class="a tbi" style="left:200px;width:40px"></div>
<div class="a tbi" style="left:249px;width:40px"></div>
<div class="a tbi" style="left:298px;width:40px"></div>
<div class="a tbi" style="left:347px;width:40px"></div>
<div class="a tbi" style="left:396px;width:40px"></div>
<div class="a tbi" style="left:445px;width:40px"></div>
<div class="a tbi" style="left:494px;width:40px"></div>
<div class="a tbi" style="left:539px;width:48px"></div>
<div class="a" style="left:182px;top:1078px;width:9px;height:2px;background:#5f8d99"></div>
<div class="a" style="left:330px;top:1078px;width:8px;height:2px;background:#5f8d99"></div>
<!-- tray -->
<svg class="a" style="left:1698px;top:1055px" width="14" height="9"><path d="M1 8 L7 2 L13 8" fill="none" stroke="#fff" stroke-width="1.2"/></svg>
<svg class="a" style="left:1720px;top:1052px" width="18" height="16"><path d="M1.5 5.5 H4.5 L9 1.5 V14.5 L4.5 10.5 H1.5Z" fill="none" stroke="#fff" stroke-width="1.1"/><path d="M11 5.5 Q12.5 8 11 10.5 M13 3.5 Q15.5 8 13 12.5 M15 1.5 Q18.5 8 15 14.5" fill="none" stroke="#fff" stroke-width="0.9"/></svg>
<svg class="a" style="left:1744px;top:1052px" width="18" height="17"><rect x="5.5" y="1.5" width="11" height="8" fill="none" stroke="#fff" stroke-width="1.1"/><rect x="1" y="3" width="3.4" height="3" fill="none" stroke="#fff" stroke-width="1"/><path d="M2.7 6 V14 H7" fill="none" stroke="#fff" stroke-width="1.1"/><path d="M11.5 9.5 L16 16.5 H7Z" fill="#f2b817"/><path d="M11.5 12 V14.2 M11.5 15 V15.6" stroke="#000" stroke-width="1"/></svg>
<div class="a" style="left:1772px;top:1053px;font-size:11px;line-height:14px;color:#fff">ENG</div>
<div class="a" style="left:1820px;top:1045px;font-size:11px;line-height:13px;color:#fff">15:31</div>
<div class="a" style="left:1807px;top:1062px;font-size:11px;line-height:13px;color:#fff">26.06.2018</div>
<svg class="a" style="left:1877px;top:1050px" width="28" height="27"><path d="M2.5 2.5 H17.5 V13.5 H8 L5 16.5 V13.5 H2.5Z" fill="#fff"/><path d="M5 5.5 H15 M5 8 H15 M5 10.5 H12" stroke="#0a1115" stroke-width="1"/><circle cx="15" cy="15" r="7" fill="#3a3f42" stroke="#888" stroke-width="1"/><text x="15" y="19" text-anchor="middle" font-family="Liberation Sans" font-size="10" fill="#fff">1</text></svg>
<div class="a" style="left:1915px;top:1040px;width:1px;height:40px;background:#5a6064"></div>
</body></html>
